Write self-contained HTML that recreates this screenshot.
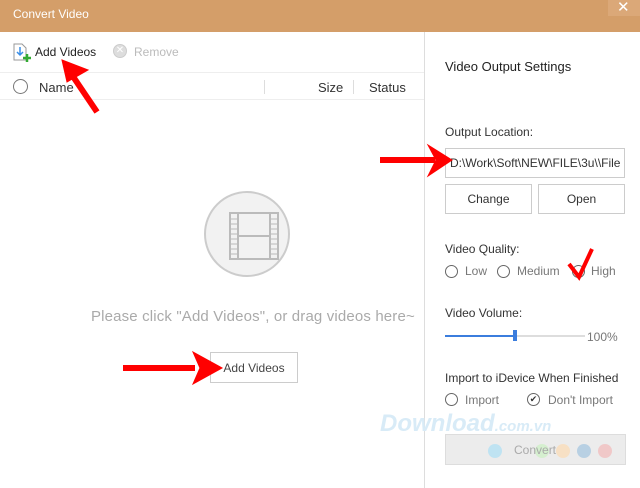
<html><head><style>
body{margin:0;width:640px;height:488px;overflow:hidden;background:#fff;font-family:"Liberation Sans",sans-serif;font-size:12px;color:#333;position:relative}
.a{position:absolute;white-space:nowrap}
.btn{position:absolute;border:1px solid #ccc;background:#fff;text-align:center;box-sizing:border-box}
.rad{position:absolute;width:13px;height:13px;border:1px solid #666;border-radius:50%;box-sizing:border-box}
</style></head><body>
<div class="a" style="left:0;top:0;width:640px;height:32px;background:#d49e69"></div>
<div class="a" style="left:13px;top:7px;color:#fff;font-size:12px">Convert Video</div>
<div class="a" style="left:608px;top:0;width:32px;height:16px;background:#dba878"></div>
<div class="a" style="left:617px;top:-2px;color:#fff;font-size:15px">✕</div>
<div class="a" style="left:424px;top:32px;width:1px;height:456px;background:#ddd"></div>
<svg class="a" style="left:13px;top:43px" width="20" height="20"><path d="M1 1h8l4 4v12H1z" fill="#fff" stroke="#999"/><path d="M7 4v8M4 9l3 3 3-3" stroke="#3a8ee6" fill="none" stroke-width="1.5"/><path d="M14 11v8M10 15h8" stroke="#3a3" stroke-width="2.5"/></svg>
<div class="a" style="left:35px;top:45px;font-size:12px;color:#222">Add Videos</div>
<div class="a" style="left:113px;top:44px;width:14px;height:14px;border-radius:50%;background:#ddd;border:1px solid #ccc;box-sizing:border-box;color:#fff;font-size:10px;text-align:center;line-height:12px">✕</div>
<div class="a" style="left:134px;top:45px;font-size:12px;color:#bbb">Remove</div>
<div class="a" style="left:0;top:72px;width:424px;height:1px;background:#eee"></div>
<div class="rad" style="left:13px;top:79px;width:15px;height:15px;border-color:#777"></div>
<div class="a" style="left:39px;top:80px;font-size:13px">Name</div>
<div class="a" style="left:264px;top:80px;width:1px;height:14px;background:#ddd"></div>
<div class="a" style="left:318px;top:80px;font-size:13px">Size</div>
<div class="a" style="left:353px;top:80px;width:1px;height:14px;background:#ddd"></div>
<div class="a" style="left:369px;top:80px;font-size:13px">Status</div>
<div class="a" style="left:0;top:99px;width:424px;height:1px;background:#eee"></div>
<div class="a" style="left:204px;top:191px;width:86px;height:86px;border:2px solid #ccc;border-radius:50%;background:#f2f2f2;box-sizing:border-box"></div>
<svg class="a" style="left:229px;top:212px" width="50" height="48"><rect x="1" y="1" width="48" height="46" fill="none" stroke="#bbb" stroke-width="2"/><rect x="9" y="1" width="32" height="46" fill="none" stroke="#bbb" stroke-width="2"/><path d="M9 24h32" stroke="#bbb" stroke-width="2"/><path d="M1 7h8M1 12h8M1 17h8M1 22h8M1 27h8M1 32h8M1 37h8M1 42h8M41 7h8M41 12h8M41 17h8M41 22h8M41 27h8M41 32h8M41 37h8M41 42h8" stroke="#bbb"/></svg>
<div class="a" style="left:91px;top:308px;font-size:15px;color:#aaa;letter-spacing:0.15px">Please click "Add Videos", or drag videos here~</div>
<div class="btn" style="left:210px;top:352px;width:88px;height:31px;line-height:31px;color:#444">Add Videos</div>
<div class="a" style="left:445px;top:59px;font-size:13px;color:#222">Video Output Settings</div>
<div class="a" style="left:445px;top:125px">Output Location:</div>
<div class="a" style="left:445px;top:148px;width:180px;height:30px;border:1px solid #ccc;box-sizing:border-box;overflow:hidden;padding-left:4px;line-height:28px;font-size:12px">D:\Work\Soft\NEW\FILE\3u\\File</div>
<div class="btn" style="left:445px;top:184px;width:87px;height:30px;line-height:28px">Change</div>
<div class="btn" style="left:538px;top:184px;width:87px;height:30px;line-height:28px">Open</div>
<div class="a" style="left:445px;top:242px">Video Quality:</div>
<div class="rad" style="left:445px;top:265px"></div><div class="a" style="left:465px;top:264px;color:#777">Low</div>
<div class="rad" style="left:497px;top:265px"></div><div class="a" style="left:517px;top:264px;color:#777">Medium</div>
<div class="rad" style="left:572px;top:265px"></div><div class="a" style="left:591px;top:264px;color:#777">High</div>
<div class="a" style="left:445px;top:306px">Video Volume:</div>
<div class="a" style="left:445px;top:335px;width:140px;height:2px;background:#ddd"></div>
<div class="a" style="left:445px;top:335px;width:70px;height:2px;background:#3b7ddd"></div>
<div class="a" style="left:513px;top:330px;width:4px;height:11px;background:#3b7ddd"></div>
<div class="a" style="left:587px;top:330px;color:#777">100%</div>
<div class="a" style="left:445px;top:371px">Import to iDevice When Finished</div>
<div class="rad" style="left:445px;top:393px"></div><div class="a" style="left:465px;top:393px;color:#777">Import</div>
<div class="rad" style="left:527px;top:393px;font-size:9px;line-height:11px;text-align:center">✔</div><div class="a" style="left:548px;top:393px;color:#777">Don't Import</div>
<div class="a" style="left:380px;top:410px;font-size:24px;font-weight:bold;font-style:italic;color:#d8ebf7">Download<span style="font-size:15px">.com.vn</span></div>
<div class="a" style="left:445px;top:434px;width:181px;height:31px;border:1px solid #ddd;background:#ececec;box-sizing:border-box"></div>
<div class="a" style="left:488px;top:444px;width:14px;height:14px;border-radius:50%;background:#bfe3f2"></div>
<div class="a" style="left:535px;top:444px;width:14px;height:14px;border-radius:50%;background:#d5efcf"></div>
<div class="a" style="left:556px;top:444px;width:14px;height:14px;border-radius:50%;background:#f7e0c4"></div>
<div class="a" style="left:577px;top:444px;width:14px;height:14px;border-radius:50%;background:#b8d0e3"></div>
<div class="a" style="left:598px;top:444px;width:14px;height:14px;border-radius:50%;background:#f0c8c8"></div>
<div class="a" style="left:514px;top:443px;color:#aaa">Convert</div>
<svg class="a" style="left:0;top:0" width="640" height="488">
<g fill="#f00" stroke="#f00">
<path d="M97 112L72 75" stroke-width="6"/><path d="M62 60L88 70L67 82z"/>
<path d="M380 160H435" stroke-width="6"/><path d="M452 160L428 145L436 160L428 176z"/>
<path d="M123 368H195" stroke-width="6"/><path d="M222 368L193 352L200 368L193 384z"/>
<path d="M569 264L579 277L592 249" fill="none" stroke-width="4"/>
</g></svg>
</body></html>
